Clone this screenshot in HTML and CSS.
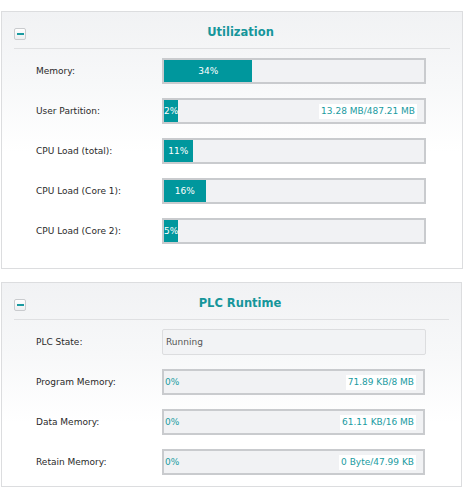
FILE: index.html
```html
<!DOCTYPE html>
<html>
<head>
<meta charset="utf-8">
<link rel="stylesheet" href="styles.css">
</head>
<body>
<div class="page">
  <section class="panel panel-util">
    <div class="panel-head">
      <span class="toggle"><span class="dash"></span></span>
      <h2 class="title">Utilization</h2>
    </div>
    <div class="panel-body">
      <div class="row">
        <div class="label">Memory:</div>
        <div class="bar"><div class="fill" style="width:34%">34%</div></div>
      </div>
      <div class="row">
        <div class="label">User Partition:</div>
        <div class="bar"><div class="fill" style="width:2%">2%</div><span class="amount">13.28 MB/487.21 MB</span></div>
      </div>
      <div class="row">
        <div class="label">CPU Load (total):</div>
        <div class="bar"><div class="fill" style="width:11%">11%</div></div>
      </div>
      <div class="row">
        <div class="label">CPU Load (Core 1):</div>
        <div class="bar"><div class="fill" style="width:16%">16%</div></div>
      </div>
      <div class="row">
        <div class="label">CPU Load (Core 2):</div>
        <div class="bar"><div class="fill" style="width:5%">5%</div></div>
      </div>
    </div>
  </section>

  <section class="panel panel-plc">
    <div class="panel-head">
      <span class="toggle"><span class="dash"></span></span>
      <h2 class="title">PLC Runtime</h2>
    </div>
    <div class="panel-body">
      <div class="row">
        <div class="label">PLC State:</div>
        <div class="state">Running</div>
      </div>
      <div class="row">
        <div class="label">Program Memory:</div>
        <div class="bar"><div class="fill empty">0%</div><span class="amount">71.89 KB/8 MB</span></div>
      </div>
      <div class="row">
        <div class="label">Data Memory:</div>
        <div class="bar"><div class="fill empty">0%</div><span class="amount">61.11 KB/16 MB</span></div>
      </div>
      <div class="row">
        <div class="label">Retain Memory:</div>
        <div class="bar"><div class="fill empty">0%</div><span class="amount">0 Byte/47.99 KB</span></div>
      </div>
    </div>
  </section>
</div>
</body>
</html>
```

FILE: styles.css
```css
html, body {
  margin: 0;
  padding: 0;
  background: #ffffff;
}

body {
  font-family: "DejaVu Sans", Verdana, sans-serif;
  font-size: 9px;
  color: #333333;
}

.page {
  display: flex;
  flex-direction: column;
  gap: 13px;
  padding: 11px 0 0 1px;
}

.panel {
  box-sizing: border-box;
  border: 1px solid #dcdddf;
  background: linear-gradient(to bottom, #f1f2f4 0px, #f7f8f9 70px, #ffffff 140px);
}

.panel-util {
  width: 462px;
}

.panel-plc {
  width: 461px;
}

.panel-head {
  box-sizing: border-box;
  display: flex;
  align-items: center;
  height: 37px;
  padding-top: 10px;
  padding-bottom: 6px;
  margin: 0 12px;
  border-bottom: 1px solid #dfe0e2;
}

.toggle {
  box-sizing: border-box;
  width: 12px;
  height: 12px;
  margin-top: 3px;
  border: 1px solid #c9cbce;
  border-radius: 2px;
  background: linear-gradient(to bottom, #ffffff, #eceef0);
  display: flex;
  align-items: center;
  justify-content: center;
  flex: none;
}

.dash {
  width: 7px;
  height: 2px;
  background: #1a9ba1;
}

.title {
  flex: 1;
  margin: 0 0 0 5px;
  text-align: center;
  font-size: 11.5px;
  font-weight: bold;
  color: #16969b;
  line-height: 14px;
}

.panel-body {
  display: flex;
  flex-direction: column;
  gap: 14px;
  padding: 9px 0 24px 0;
}

.panel-plc .panel-body {
  padding-bottom: 11px;
}

.row {
  display: flex;
  align-items: center;
  height: 26px;
}

.label {
  width: 126px;
  padding-left: 34px;
  flex: none;
  color: #2a2a2a;
}

.bar {
  box-sizing: border-box;
  width: 264px;
  height: 26px;
  border: 2px solid #c9cbce;
  background: #f1f2f4;
  display: flex;
  align-items: center;
}

.panel-plc .bar {
  width: 263px;
}

.fill {
  height: 100%;
  min-width: max-content;
  background: #00979d;
  color: #ffffff;
  display: flex;
  align-items: center;
  justify-content: center;
}

.fill.empty {
  background: transparent;
  color: #1a9ba1;
  padding-left: 1px;
}

.amount {
  margin-left: auto;
  margin-right: 7px;
  background: #ffffff;
  color: #1a9ba1;
  font-size: 9px;
  padding: 1px 2px;
  line-height: 13px;
}

.state {
  box-sizing: border-box;
  width: 264px;
  height: 26px;
  border: 1px solid #dcdddf;
  border-radius: 2px;
  background: #f2f3f5;
  color: #555555;
  display: flex;
  align-items: center;
  padding-left: 3px;
}
```
